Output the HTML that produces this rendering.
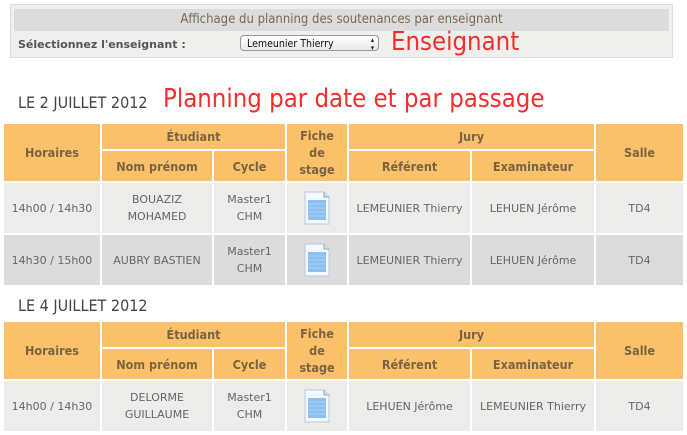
<!DOCTYPE html>
<html><head><meta charset="utf-8"><style>
body{margin:0;width:687px;height:435px;background:#fff;position:relative;overflow:hidden;font-family:"DejaVu Sans",Verdana,sans-serif;}
.box{position:absolute;left:10px;top:4px;width:661px;height:52px;background:#efefed;border:1px solid #ddd;}
.bh{position:absolute;left:3px;top:4px;width:655px;height:22px;background:#dcdcdc;color:#7a6a50;font-size:13px;text-align:center;line-height:22px;font-family:"DejaVu Sans Condensed","DejaVu Sans",sans-serif;}
.lbl{position:absolute;left:7px;top:33px;font-size:11px;font-weight:bold;color:#555;}
.sel{position:absolute;left:240px;top:35px;height:16px;border:1px solid #999;border-radius:4px;background:linear-gradient(#fff,#e8e8e8);font-size:10.5px;line-height:16px;padding-left:6px;box-sizing:border-box;width:139px;color:#111;font-family:"DejaVu Sans Condensed","DejaVu Sans",sans-serif;}
.sel span{position:absolute;right:4px;top:0;font-size:7px;line-height:8px;}
.red{position:absolute;color:#f0302f;font-family:"DejaVu Sans Condensed","Liberation Sans",sans-serif;}
.date{position:absolute;left:18px;font-size:16px;color:#444;font-family:"DejaVu Sans Condensed","DejaVu Sans",sans-serif;}
table{position:absolute;left:2px;border-spacing:2px;table-layout:fixed;width:683px;}
th{background:#fbc06a;color:#7a6440;font-weight:bold;font-size:12.5px;font-family:"DejaVu Sans Condensed","DejaVu Sans",sans-serif;padding:0;line-height:17px;}
td{text-align:center;font-size:11px;color:#666;padding:0;line-height:17px;}
tr.a td{background:#ececea;}
tr.b td{background:#dcdcdc;}
.doc{display:inline-block;vertical-align:middle}
</style></head><body>
<div class="box"><div class="bh">Affichage du planning des soutenances par enseignant</div>
<div class="lbl">Sélectionnez l'enseignant :</div></div>
<div class="sel">Lemeunier Thierry<span>▴<br>▾</span></div>
<div class="red" style="left:391px;top:27px;font-size:25.5px;">Enseignant</div>
<div class="date" style="top:93px;">LE 2 JUILLET 2012</div>
<div class="red" style="left:163px;top:84px;font-size:25.5px;">Planning par date et par passage</div>
<table style="top:122px">
<colgroup><col style="width:96px"><col style="width:110px"><col style="width:71px"><col style="width:60px"><col style="width:121px"><col style="width:122px"><col style="width:87px"></colgroup>
<tr style="height:25px"><th rowspan="2">Horaires</th><th colspan="2">Étudiant</th><th rowspan="2">Fiche<br>de<br>stage</th><th colspan="2">Jury</th><th rowspan="2">Salle</th></tr>
<tr style="height:30px"><th>Nom prénom</th><th>Cycle</th><th>Référent</th><th>Examinateur</th></tr>
<tr class="a" style="height:50px"><td>14h00 / 14h30</td><td>BOUAZIZ<br>MOHAMED</td><td>Master1<br>CHM</td><td><svg class="doc" width="28" height="34" viewBox="0 0 28 34"><path d="M2 1H21L26 6V33H2Z" fill="#f4f8ff" stroke="#b8c8dc"/><path d="M21 1V6H26" fill="#dde" stroke="#8aa"/><rect x="5" y="9" width="18" height="20" fill="#8cc0ee"/><path d="M5 13H23M5 17H23M5 21H23M5 25H23" stroke="#b6d8f6" stroke-width=".7"/></svg></td><td>LEMEUNIER Thierry</td><td>LEHUEN Jérôme</td><td>TD4</td></tr>
<tr class="b" style="height:50px"><td>14h30 / 15h00</td><td>AUBRY BASTIEN</td><td>Master1<br>CHM</td><td><svg class="doc" width="28" height="34" viewBox="0 0 28 34"><path d="M2 1H21L26 6V33H2Z" fill="#f4f8ff" stroke="#b8c8dc"/><path d="M21 1V6H26" fill="#dde" stroke="#8aa"/><rect x="5" y="9" width="18" height="20" fill="#8cc0ee"/><path d="M5 13H23M5 17H23M5 21H23M5 25H23" stroke="#b6d8f6" stroke-width=".7"/></svg></td><td>LEMEUNIER Thierry</td><td>LEHUEN Jérôme</td><td>TD4</td></tr>
</table>
<div class="date" style="top:296px;">LE 4 JUILLET 2012</div>
<table style="top:320px">
<colgroup><col style="width:96px"><col style="width:110px"><col style="width:71px"><col style="width:60px"><col style="width:121px"><col style="width:122px"><col style="width:87px"></colgroup>
<tr style="height:25px"><th rowspan="2">Horaires</th><th colspan="2">Étudiant</th><th rowspan="2">Fiche<br>de<br>stage</th><th colspan="2">Jury</th><th rowspan="2">Salle</th></tr>
<tr style="height:30px"><th>Nom prénom</th><th>Cycle</th><th>Référent</th><th>Examinateur</th></tr>
<tr class="a" style="height:50px"><td>14h00 / 14h30</td><td>DELORME<br>GUILLAUME</td><td>Master1<br>CHM</td><td><svg class="doc" width="28" height="34" viewBox="0 0 28 34"><path d="M2 1H21L26 6V33H2Z" fill="#f4f8ff" stroke="#b8c8dc"/><path d="M21 1V6H26" fill="#dde" stroke="#8aa"/><rect x="5" y="9" width="18" height="20" fill="#8cc0ee"/><path d="M5 13H23M5 17H23M5 21H23M5 25H23" stroke="#b6d8f6" stroke-width=".7"/></svg></td><td>LEHUEN Jérôme</td><td>LEMEUNIER Thierry</td><td>TD4</td></tr>
</table>
</body></html>
